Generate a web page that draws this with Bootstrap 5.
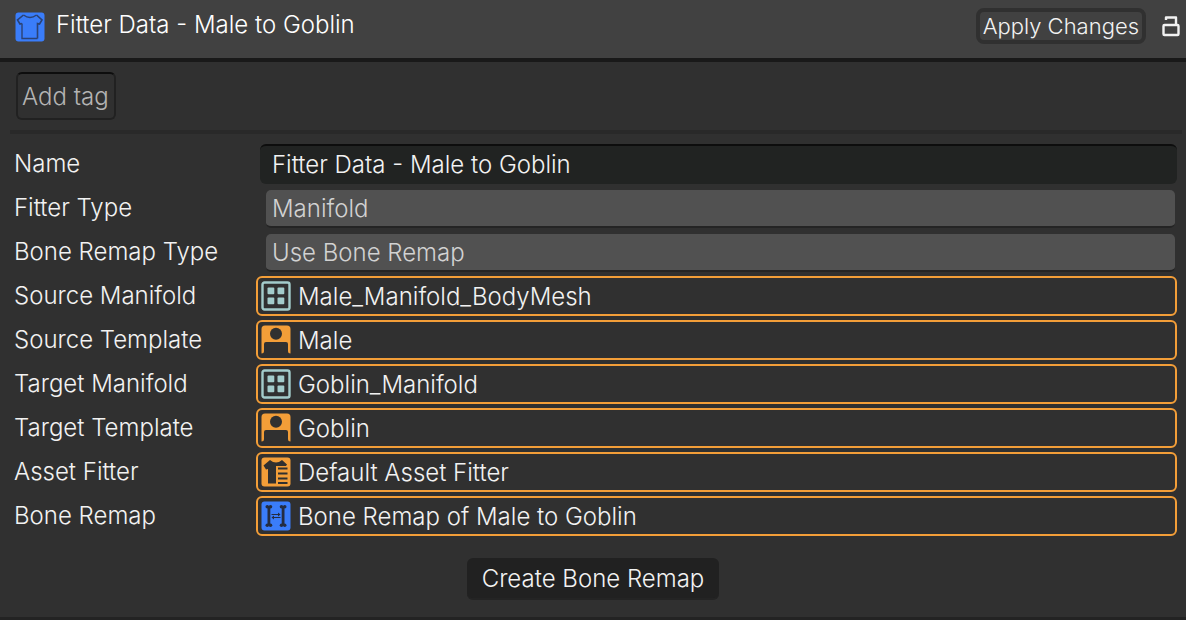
<!DOCTYPE html>
<html lang="en" data-bs-theme="dark">
<head>
<meta charset="utf-8">
<meta name="viewport" content="width=device-width, initial-scale=1">
<title>Fitter Data - Male to Goblin</title>
<link href="https://cdn.jsdelivr.net/npm/bootstrap@5.3.0/dist/css/bootstrap.min.css" rel="stylesheet">
<style>
body { font-family: Inter, sans-serif; font-weight: 300; font-size: 24px; line-height: 32px; color: #f2f2f2; background: #303030; }
button, input, select { font: inherit; color: inherit; }
svg { display: block; flex: none; }
.inspector-head { background: #414141; border-bottom: 4px solid #191919; height: 62px; padding: 8px 6px 0 15px; }
.inspector-title { font-size: 24px; line-height: 34px; font-weight: 300; margin-left: 11px; }
.apply-btn { height: 36px; font-size: 22px; line-height: 28px; padding: 0 3px; border: 4px solid #303030; border-radius: 8px; background: #414141; }
.lock-btn { border: 0; background: none; padding: 0; }
.tag-bar { padding: 10px 16px; }
.tag-btn { height: 48px; padding: 2px 5px 0 4px; border: 2px solid #212121; border-top-color: #0d0d0d; border-radius: 6px; background: #303030; color: #b4b4b4; }
.rule { height: 4px; background: #292929; margin: 0 4px 0 10px; }
.fields { display: grid; grid-template-columns: 242px 1fr; row-gap: 4px; padding: 10px 9px 0 14px; }
.fields label { height: 40px; line-height: 40px; }
.name-box { height: 40px; width: calc(100% - 4px); margin-left: 4px; padding: 0 12px 2px; background: #212322; border: 0; border-top: 2px solid #0d0d0d; border-radius: 6px; }
.pick { appearance: none; height: 38px; width: calc(100% - 12px); margin: 2px 2px 0 10px; padding: 2px 6px 0; background: #515151; color: #d2d2d2; border: 0; border-bottom: 2px solid #242424; border-radius: 5px; }
.asset { height: 40px; padding: 0 3px; gap: 7px; border: 2px solid #f39e38; border-radius: 6px; }
.asset input { background: none; border: 0; padding: 2px 0 0; min-width: 0; outline: 0; }
.create-row { margin-top: 22px; }
.create-btn { height: 42px; padding: 2px 15px 0; background: #212121; border: 0; border-bottom: 2px solid #242424; border-radius: 6px; }
.foot-rule { height: 4px; background: #232323; margin-top: 17px; }
</style>
</head>
<body>
<header class="inspector-head d-flex align-items-start">
  <svg class="mt-1" width="30" height="30" viewBox="0 0 30 30" aria-hidden="true"><rect x=".5" y=".5" width="29" height="29" rx="3" fill="#3a7dfa"/><path d="M8.500 3Q15 8 21.500 3M22.500 26.500H7V11.500" fill="none" stroke="#2b4274" stroke-width="1.400"/><path d="M22.500 26.500V11.500L24.500 12 27 8 21.500 3M7 11.500L5 12 2.500 8 8.500 3" fill="none" stroke="#2b4274" stroke-width="1.600"/></svg>
  <h1 class="inspector-title mb-0 flex-grow-1">Fitter Data - Male to Goblin</h1>
  <button type="button" class="apply-btn">Apply Changes</button>
  <button type="button" class="lock-btn ms-3 pt-2" aria-label="Lock"><svg width="18" height="22" viewBox="0 0 18 22" fill="none" stroke="#f2f2f2" stroke-width="2.400" stroke-linejoin="round"><rect x="1.500" y="9" width="15" height="10" rx="1"/><path d="M4 4V1.500H14V9"/></svg></button>
</header>
<main>
  <div class="tag-bar"><button type="button" class="tag-btn d-block">Add tag</button></div>
  <div class="rule"></div>
  <form class="fields">
    <label for="f1">Name</label><input id="f1" class="name-box" value="Fitter Data - Male to Goblin">
    <label for="f2">Fitter Type</label><select id="f2" class="pick"><option>Manifold</option></select>
    <label for="f3">Bone Remap Type</label><select id="f3" class="pick"><option>Use Bone Remap</option></select>
    <label for="f4">Source Manifold</label>
    <div class="asset d-flex align-items-center"><svg width="30" height="30" viewBox="0 0 30 30"><use href="#grid"/></svg><input id="f4" class="flex-grow-1" value="Male_Manifold_BodyMesh"></div>
    <label for="f5">Source Template</label>
    <div class="asset d-flex align-items-center"><svg width="30" height="30" viewBox="0 0 30 30"><use href="#person"/></svg><input id="f5" class="flex-grow-1" value="Male"></div>
    <label for="f6">Target Manifold</label>
    <div class="asset d-flex align-items-center"><svg width="30" height="30" viewBox="0 0 30 30"><use href="#grid"/></svg><input id="f6" class="flex-grow-1" value="Goblin_Manifold"></div>
    <label for="f7">Target Template</label>
    <div class="asset d-flex align-items-center"><svg width="30" height="30" viewBox="0 0 30 30"><use href="#person"/></svg><input id="f7" class="flex-grow-1" value="Goblin"></div>
    <label for="f8">Asset Fitter</label>
    <div class="asset d-flex align-items-center"><svg width="30" height="30" viewBox="0 0 30 30"><use href="#fitter"/></svg><input id="f8" class="flex-grow-1" value="Default Asset Fitter"></div>
    <label for="f9">Bone Remap</label>
    <div class="asset d-flex align-items-center"><svg width="30" height="30" viewBox="0 0 30 30"><use href="#bones"/></svg><input id="f9" class="flex-grow-1" value="Bone Remap of Male to Goblin"></div>
  </form>
  <div class="create-row d-flex justify-content-center"><button type="button" class="create-btn">Create Bone Remap</button></div>
  <div class="foot-rule"></div>
</main>
<svg width="0" height="0" class="position-absolute" aria-hidden="true">
  <defs>
    <g id="grid"><rect x="1.500" y="1.500" width="27" height="27" rx="2" fill="none" stroke="#a3cccb" stroke-width="2.400"/><g fill="#a3cccb"><rect x="6.500" y="6.500" width="6.800" height="6.800" rx="1"/><rect x="16.500" y="6.500" width="6.800" height="6.800" rx="1"/><rect x="6.500" y="16.500" width="6.800" height="6.800" rx="1"/><rect x="16.500" y="16.500" width="6.800" height="6.800" rx="1"/></g></g>
    <g id="person"><path d="M.5 28.500V4Q.5 .5 4 .5H26Q29.500 .5 29.500 4V28.500Q27 28.500 27 26V19Q27 17 25 17H5Q3 17 3 19V26Q3 28.500 .5 28.500Z" fill="#f39e38"/><circle cx="15" cy="8.700" r="6" fill="#303030"/></g>
    <g id="fitter"><rect x=".5" y=".5" width="29" height="29" rx="3" fill="#f39e38"/><path d="M9 3Q15 8 21 3L26 7.500 25 9H15V26.500H7V12L5 12.500 2.500 8.500Z" fill="#303030"/><path d="M17 11.500H26.500M17 16.500H26.500M17 21.500H26.500M17 26H26.500" stroke="#303030" stroke-width="1.800"/></g>
    <g id="bones"><rect x=".5" y=".5" width="29" height="29" rx="3" fill="#3a7dfa"/><g fill="#242d42"><path d="M6.500 5H9.300V25H6.500Z"/><circle cx="6.300" cy="5.800" r="1.800"/><circle cx="9.500" cy="5.800" r="1.800"/><circle cx="6.300" cy="24.200" r="1.800"/><circle cx="9.500" cy="24.200" r="1.800"/><path d="M20.700 5H23.500V25H20.700Z"/><circle cx="20.500" cy="5.800" r="1.800"/><circle cx="23.700" cy="5.800" r="1.800"/><circle cx="20.500" cy="24.200" r="1.800"/><circle cx="23.700" cy="24.200" r="1.800"/><path d="M17 11.500L19.500 13.500 17 15.500ZM13 14.500L10.500 16.500 13 18.500Z"/></g><path d="M10.500 13.500H18M12 16.500H19.500" stroke="#242d42"/></g>
  </defs>
</svg>
<script src="https://cdn.jsdelivr.net/npm/bootstrap@5.3.0/dist/js/bootstrap.bundle.min.js"></script>
</body>
</html>
